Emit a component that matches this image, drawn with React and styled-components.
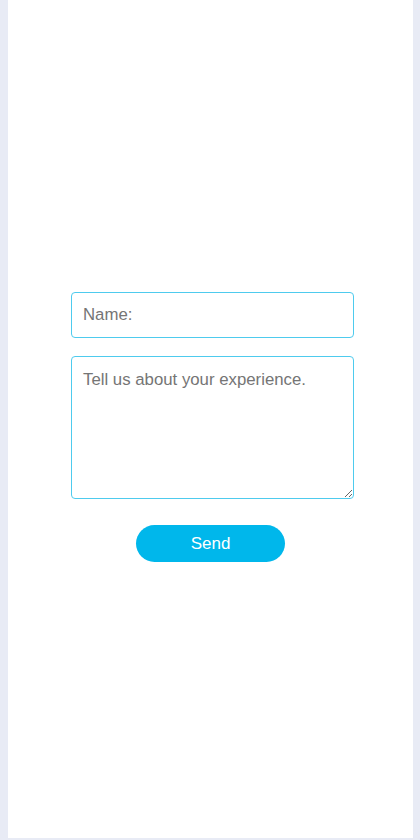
import React from "react";
import styled, { createGlobalStyle } from "styled-components";

const GlobalStyle = createGlobalStyle`
  html, body {
    margin: 0;
    padding: 0;
    background: #e8ebf5;
  }
  body {
    font-family: "Liberation Sans", Arial, sans-serif;
  }
`;

const Page = styled.div`
  display: flex;
  padding: 0 7px 2px 8px;
  min-height: 840px;
  box-sizing: border-box;
`;

const Panel = styled.main`
  flex: 1;
  background: #ffffff;
  display: flex;
  flex-direction: column;
  align-items: center;
  justify-content: center;
  padding-top: 16px;
  box-sizing: border-box;
`;

const Form = styled.form`
  display: flex;
  flex-direction: column;
  align-items: center;
  gap: 26px;
`;

const Fields = styled.div`
  display: flex;
  flex-direction: column;
  gap: 18px;
  width: 283px;
  margin-left: 4px;
`;

const fieldStyle = `
  box-sizing: border-box;
  width: 100%;
  border: 1px solid #4ecbee;
  border-radius: 4px;
  padding: 0 11px;
  font-family: "Liberation Sans", Arial, sans-serif;
  font-size: 16.8px;
  color: #555;
  outline: none;
  background: #fff;

  &::placeholder {
    color: #757575;
  }
`;

const Input = styled.input`
  ${fieldStyle}
  height: 46px;
`;

const TextArea = styled.textarea`
  ${fieldStyle}
  height: 143px;
  padding-top: 13px;
  resize: vertical;
`;

const SendButton = styled.button`
  width: 149px;
  height: 37px;
  border: none;
  border-radius: 19px;
  background: #00b7eb;
  color: #ffffff;
  font-family: "Liberation Sans", Arial, sans-serif;
  font-size: 17px;
  cursor: pointer;
`;

const App = () => {
  return (
    <>
      <GlobalStyle />
      <Page>
        <Panel>
          <Form onSubmit={e => e.preventDefault()}>
            <Fields>
              <Input type="text" placeholder="Name:" />
              <TextArea placeholder="Tell us about your experience." />
            </Fields>
            <SendButton type="submit">Send</SendButton>
          </Form>
        </Panel>
      </Page>
    </>
  );
};

export default App;
